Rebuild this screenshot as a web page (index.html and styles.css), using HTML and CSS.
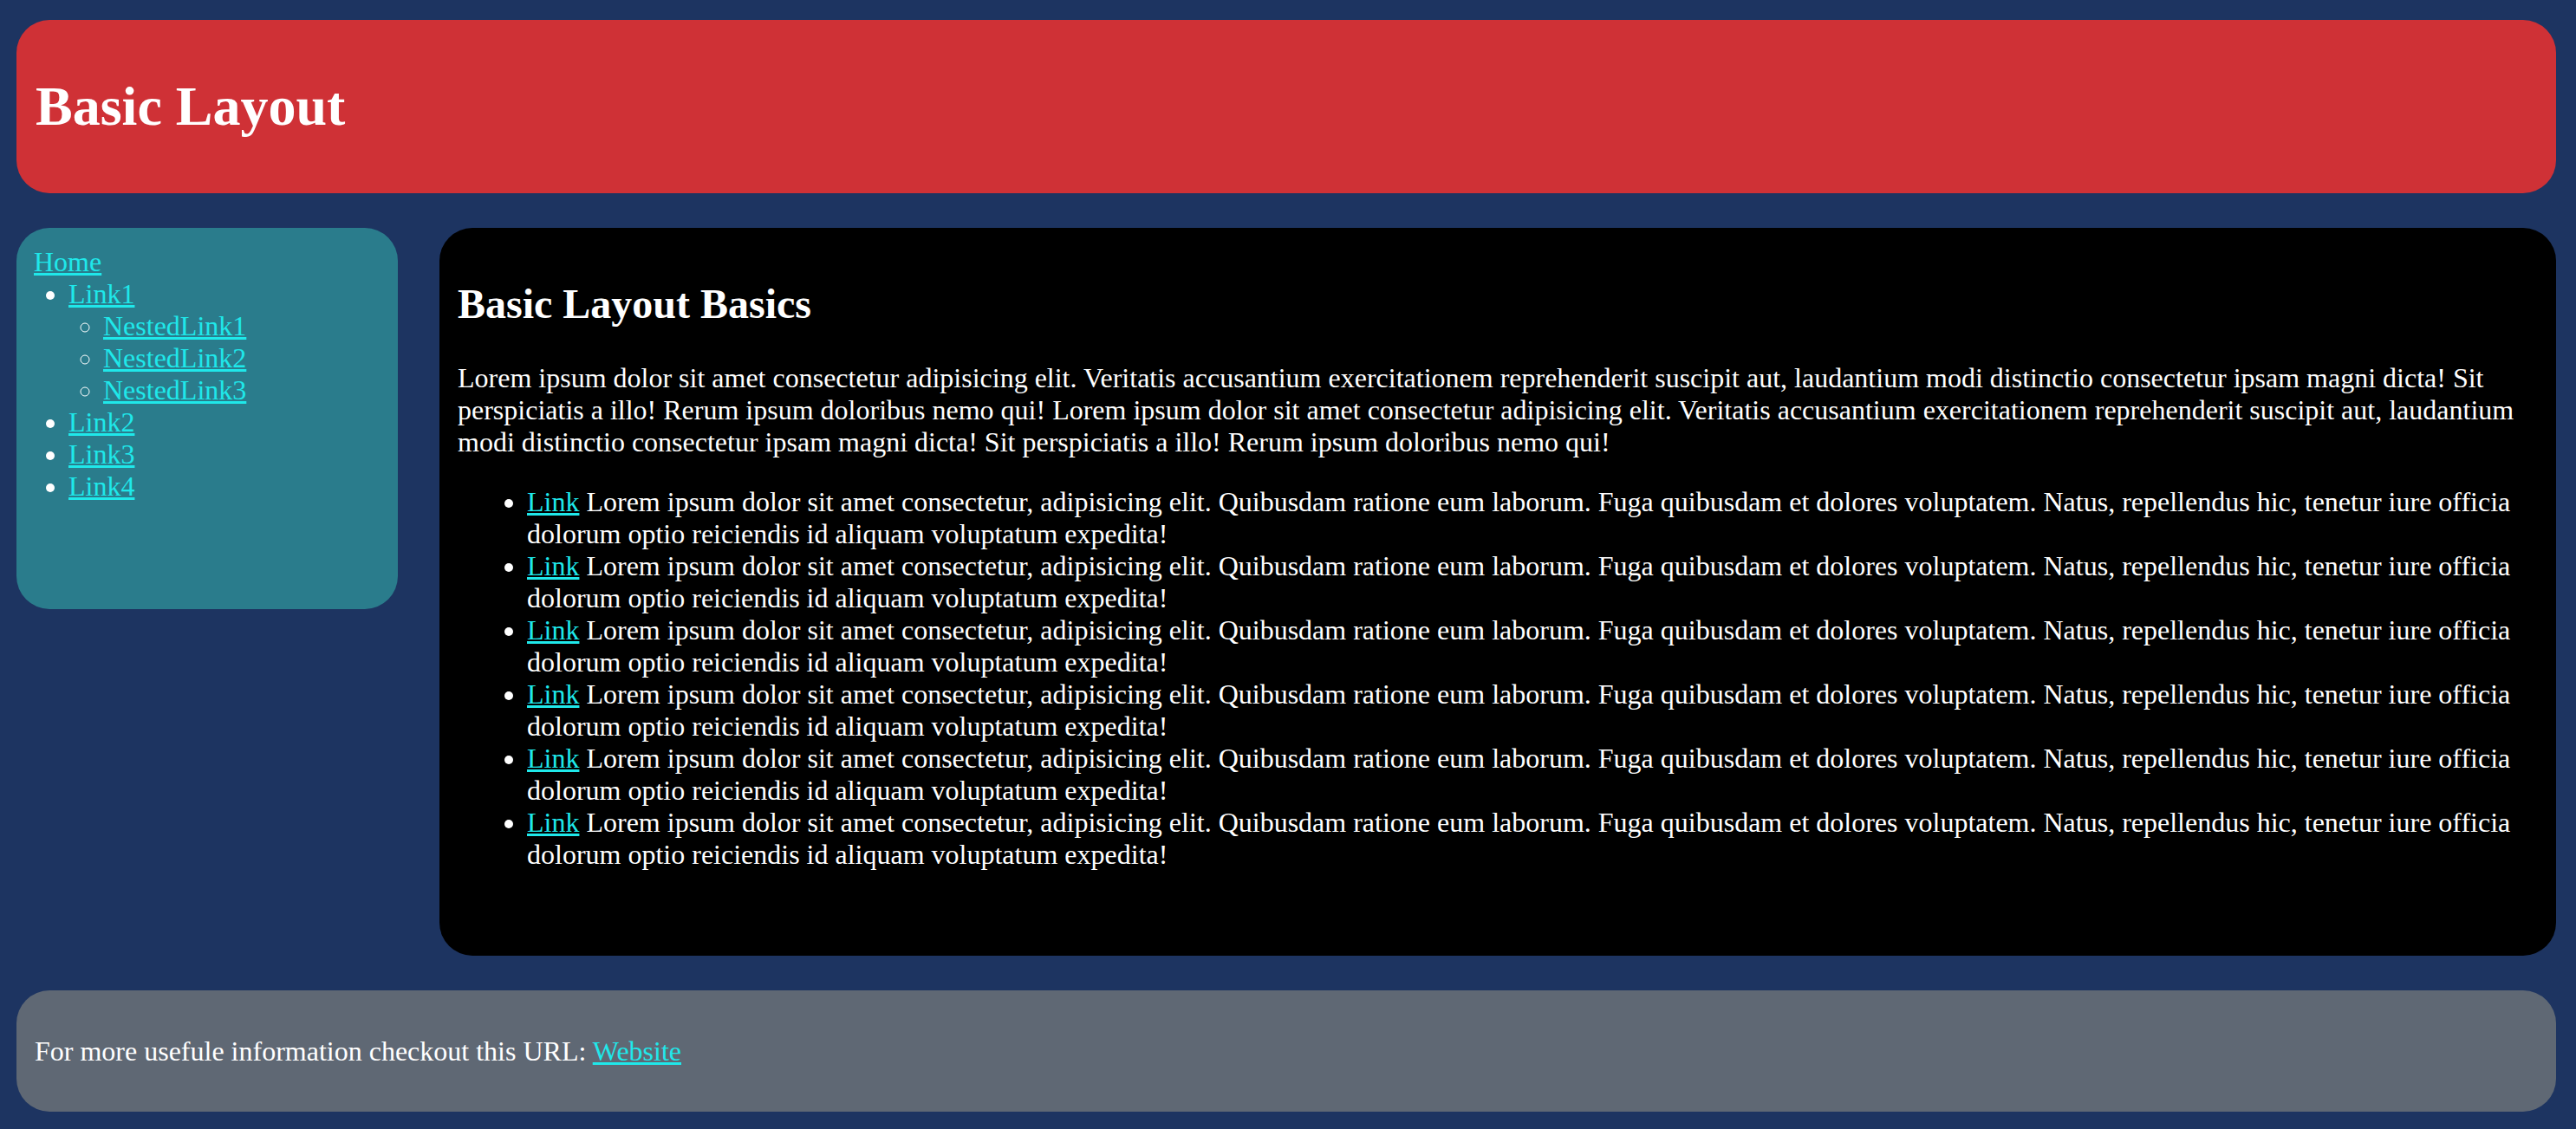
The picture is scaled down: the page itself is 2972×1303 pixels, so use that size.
FILE: index.html
```html
<!DOCTYPE html>
<html lang="en">
<head>
<meta charset="utf-8">
<title>Basic Layout</title>
<link rel="stylesheet" href="styles.css">
</head>
<body>
<div class="page">
  <header class="header">
    <h1>Basic Layout</h1>
  </header>
  <nav class="sidebar">
    <a href="#">Home</a>
    <ul class="nav-list">
      <li><a href="#">Link1</a>
        <ul class="nested">
          <li><a href="#">NestedLink1</a></li>
          <li><a href="#">NestedLink2</a></li>
          <li><a href="#">NestedLink3</a></li>
        </ul>
      </li>
      <li><a href="#">Link2</a></li>
      <li><a href="#">Link3</a></li>
      <li><a href="#">Link4</a></li>
    </ul>
  </nav>
  <main class="main">
    <h2>Basic Layout Basics</h2>
    <p>Lorem ipsum dolor sit amet consectetur adipisicing elit. Veritatis accusantium exercitationem reprehenderit suscipit aut, laudantium modi distinctio consectetur ipsam magni dicta! Sit perspiciatis a illo! Rerum ipsum doloribus nemo qui! Lorem ipsum dolor sit amet consectetur adipisicing elit. Veritatis accusantium exercitationem reprehenderit suscipit aut, laudantium modi distinctio consectetur ipsam magni dicta! Sit perspiciatis a illo! Rerum ipsum doloribus nemo qui!</p>
    <ul class="content-list">
      <li><a href="#">Link</a> Lorem ipsum dolor sit amet consectetur, adipisicing elit. Quibusdam ratione eum laborum. Fuga quibusdam et dolores voluptatem. Natus, repellendus hic, tenetur iure officia dolorum optio reiciendis id aliquam voluptatum expedita!</li>
      <li><a href="#">Link</a> Lorem ipsum dolor sit amet consectetur, adipisicing elit. Quibusdam ratione eum laborum. Fuga quibusdam et dolores voluptatem. Natus, repellendus hic, tenetur iure officia dolorum optio reiciendis id aliquam voluptatum expedita!</li>
      <li><a href="#">Link</a> Lorem ipsum dolor sit amet consectetur, adipisicing elit. Quibusdam ratione eum laborum. Fuga quibusdam et dolores voluptatem. Natus, repellendus hic, tenetur iure officia dolorum optio reiciendis id aliquam voluptatum expedita!</li>
      <li><a href="#">Link</a> Lorem ipsum dolor sit amet consectetur, adipisicing elit. Quibusdam ratione eum laborum. Fuga quibusdam et dolores voluptatem. Natus, repellendus hic, tenetur iure officia dolorum optio reiciendis id aliquam voluptatum expedita!</li>
      <li><a href="#">Link</a> Lorem ipsum dolor sit amet consectetur, adipisicing elit. Quibusdam ratione eum laborum. Fuga quibusdam et dolores voluptatem. Natus, repellendus hic, tenetur iure officia dolorum optio reiciendis id aliquam voluptatum expedita!</li>
      <li><a href="#">Link</a> Lorem ipsum dolor sit amet consectetur, adipisicing elit. Quibusdam ratione eum laborum. Fuga quibusdam et dolores voluptatem. Natus, repellendus hic, tenetur iure officia dolorum optio reiciendis id aliquam voluptatum expedita!</li>
    </ul>
  </main>
  <footer class="footer">
    <p>For more usefule information checkout this URL: <a href="#">Website</a></p>
  </footer>
</div>
</body>
</html>
```
FILE: styles.css
```css
html, body {
  margin: 0;
  padding: 0;
}

body {
  background: #1d3461;
  color: #ffffff;
  font-family: "Liberation Serif", "Times New Roman", serif;
  font-size: 32px;
  min-height: 1303px;
}

a {
  color: #1fe8ea;
  text-decoration: underline;
}

.page {
  display: grid;
  grid-template-columns: 440px 1fr;
  grid-template-rows: auto auto auto;
  column-gap: 48px;
  row-gap: 40px;
  padding: 23px 23px 20px 19px;
}

.header {
  grid-column: 1 / -1;
  background: #cf3136;
  border-radius: 38px;
  padding: 20px 22px;
  height: 200px;
  box-sizing: border-box;
}

.header h1 {
  margin: 43px 0;
  font-size: 64px;
  font-weight: bold;
}

.sidebar {
  align-self: start;
  background: #2a7c8c;
  border-radius: 38px;
  padding: 21px 20px 19px;
  height: 440px;
  box-sizing: border-box;
}

.nav-list {
  margin: 0;
  padding-left: 40px;
  list-style: disc;
}

.nested {
  margin: 0;
  padding-left: 40px;
  list-style: circle;
}

.main {
  background: #000000;
  border-radius: 38px;
  padding: 20px 21px 0 21px;
  height: 840px;
  box-sizing: border-box;
}

.main h2 {
  font-size: 48px;
  font-weight: bold;
  margin: 40px 0;
}

.main p {
  margin: 32px 0;
}

.content-list {
  margin: 32px 0;
  padding-left: 80px;
  list-style: disc;
}

.footer {
  grid-column: 1 / -1;
  background: #5f6874;
  border-radius: 38px;
  padding: 20px 21px;
  height: 140px;
  box-sizing: border-box;
}

.footer p {
  margin: 32px 0;
}
```
